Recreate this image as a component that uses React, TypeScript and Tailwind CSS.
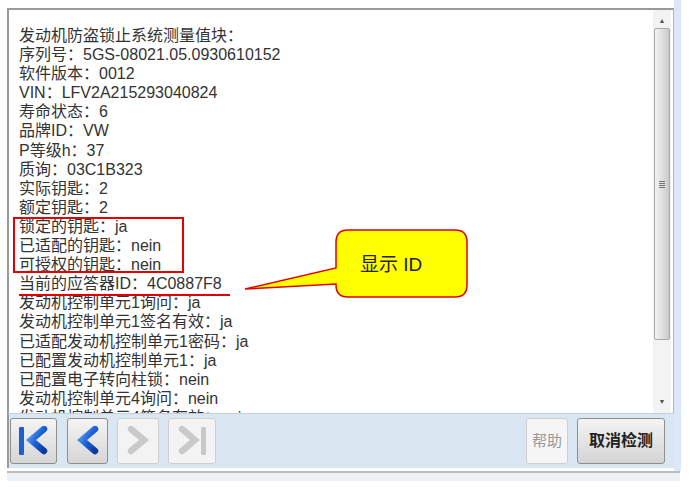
import React from "react";

const lines = [
  "发动机防盗锁止系统测量值块：",
  "序列号：5GS-08021.05.0930610152",
  "软件版本：0012",
  "VIN：LFV2A215293040824",
  "寿命状态：6",
  "品牌ID：VW",
  "P等级h：37",
  "质询：03C1B323",
  "实际钥匙：2",
  "额定钥匙：2",
  "锁定的钥匙：ja",
  "已适配的钥匙：nein",
  "可授权的钥匙：nein",
  "当前的应答器ID：4C0887F8",
  "发动机控制单元1询问：ja",
  "发动机控制单元1签名有效：ja",
  "已适配发动机控制单元1密码：ja",
  "已配置发动机控制单元1：ja",
  "已配置电子转向柱锁：nein",
  "发动机控制单元4询问：nein",
  "发动机控制单元4签名有效：nein",
];

function Chevron({ dir, bar, active }: { dir: "left" | "right"; bar?: boolean; active: boolean }) {
  const id = `g-${dir}-${bar ? "b" : "n"}`;
  const stroke = active ? `url(#${id})` : "#c9c9c9";
  const pts = dir === "left" ? "20,3 7,14 20,25" : "6,3 19,14 6,25";
  return (
    <svg width={bar ? 32 : 26} height="30" viewBox={bar ? "0 0 32 30" : "0 0 26 30"}>
      <defs>
        <linearGradient id={id} x1="0" y1="0" x2="1" y2="1">
          <stop offset="0" stopColor="#5b9cf2" />
          <stop offset="0.5" stopColor="#1a5fd6" />
          <stop offset="1" stopColor="#0a3b9c" />
        </linearGradient>
      </defs>
      {bar && dir === "left" && <rect x="1" y="1" width="5" height="28" rx="1" fill={active ? "#1b5fd0" : "#c9c9c9"} />}
      {bar && dir === "right" && <rect x="25" y="1" width="5" height="28" rx="1" fill={active ? "#1b5fd0" : "#c9c9c9"} />}
      <g transform={bar && dir === "left" ? "translate(6 0)" : undefined}>
        <polyline points={pts} fill="none" stroke={stroke} strokeWidth="6.5" strokeLinejoin="miter" strokeLinecap="round" />
      </g>
    </svg>
  );
}

export default function App() {
  return (
    <div
      className="relative w-[693px] h-[492px] bg-white overflow-hidden text-[#333]"
      style={{ fontFamily: '"Liberation Sans", "Noto Sans CJK SC", sans-serif' }}
    >
      <div className="flex pl-[7px]">
        <div className="w-[667px] pt-[8px]">
          {/* text panel */}
          <div className="h-[405px] flex bg-white border-t-2 border-l-2 border-[#9a9a9a] border-r border-r-[#b5b5b5]">
            <div className="flex-1 overflow-hidden pl-[10px] pt-[16px] text-[16px] leading-[19.1px] whitespace-nowrap">
              {lines.map((l) => (
                <div key={l}>{l}</div>
              ))}
            </div>
            {/* scrollbar */}
            <div className="w-[18px] mr-[2px] bg-[#f3f3f3] flex flex-col items-center pt-[4px] pb-[4px]">
              <div className="h-[14px] flex items-center text-[7px] text-[#555]">▲</div>
              <div className="w-[16px] h-[312px] rounded-[2px] border border-[#a9a9a9] bg-gradient-to-r from-[#f2f2f2] via-[#e0e0e0] to-[#c9c9c9] flex items-center justify-center">
                <div className="flex flex-col gap-[1px]">
                  <div className="w-[6px] h-[1px] bg-[#777]" />
                  <div className="w-[6px] h-[1px] bg-[#777]" />
                  <div className="w-[6px] h-[1px] bg-[#777]" />
                  <div className="w-[6px] h-[1px] bg-[#777]" />
                </div>
              </div>
              <div className="flex-1" />
              <div className="h-[14px] flex items-center text-[7px] text-[#555]">▼</div>
            </div>
          </div>
          {/* toolbar */}
          <div className="h-[55px] bg-[#dbe6f3] border-l-2 border-[#9a9a9a] border-t border-t-[#c5cfdb] flex items-center pl-[1px] pr-[9px]">
            <button className="w-[47px] h-[46px] rounded-[3px] border border-[#8e8e8e] bg-gradient-to-b from-[#f4f4f4] to-[#d6d6d6] flex items-center justify-center">
              <Chevron dir="left" bar active />
            </button>
            <button className="ml-[10px] w-[41px] h-[46px] rounded-[3px] border border-[#8e8e8e] bg-gradient-to-b from-[#f4f4f4] to-[#d6d6d6] flex items-center justify-center">
              <Chevron dir="left" active />
            </button>
            <button className="ml-[9px] w-[42px] h-[46px] rounded-[3px] border border-[#cfcfcf] bg-[#f3f3f3] flex items-center justify-center">
              <Chevron dir="right" active={false} />
            </button>
            <button className="ml-[9px] w-[48px] h-[46px] rounded-[3px] border border-[#cfcfcf] bg-[#f3f3f3] flex items-center justify-center">
              <Chevron dir="right" bar active={false} />
            </button>
            <div className="flex-1" />
            <button className="w-[42px] h-[46px] rounded-[3px] border border-[#cfcfcf] bg-[#f5f5f5] text-[15px] text-[#9a9a9a]">
              帮助
            </button>
            <button className="ml-[9px] w-[88px] h-[46px] rounded-[3px] border border-[#8e8e8e] bg-gradient-to-b from-[#f4f4f4] to-[#d4d4d4] text-[16px] font-bold text-[#222]">
              取消检测
            </button>
          </div>
        </div>
        <div className="w-[7px] h-[471px] bg-[#dce8f7]" />
      </div>
      <div className="ml-[7px] w-[673px] h-[2px] bg-[#b9bec5]" />
      <div className="ml-[7px] w-[673px] h-[8px] bg-[#eef2f7]" />

      {/* annotations */}
      <div className="absolute left-[13px] top-[217px] w-[171px] h-[56px] border-2 border-[#e40000]" />
      <div className="absolute left-[19px] top-[294px] w-[211px] h-[2px] bg-[#e40000]" />
      <svg className="absolute left-0 top-0" width="693" height="492">
        <path
          d="M348,230 H455 Q467,230 467,242 V285 Q467,297 455,297 H348 Q336,297 336,285 V284 L245,289 L336,268 V242 Q336,230 348,230 Z"
          fill="#ffff00"
          stroke="#e40000"
          strokeWidth="1.5"
        />
      </svg>
      <div className="absolute left-[360px] top-[253px] text-[19px] leading-[24px] text-[#222]">显示 ID</div>
    </div>
  );
}
